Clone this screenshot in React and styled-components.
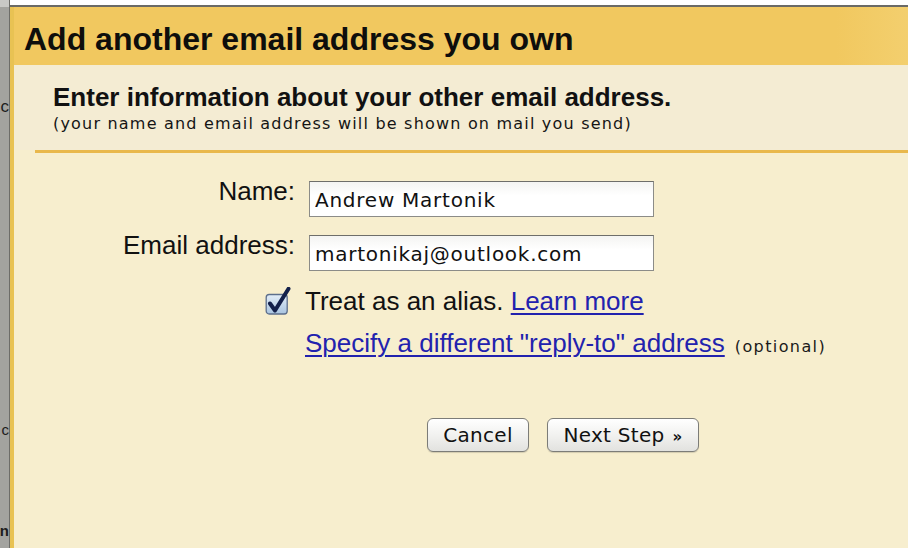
import React from 'react';
import styled, { createGlobalStyle } from 'styled-components';

const GlobalStyle = createGlobalStyle`
    html, body {
        margin: 0;
        padding: 0;
        background: #f7eece;
    }
    * {
        box-sizing: border-box;
    }
`;

const sans = `"Liberation Sans", Arial, sans-serif`;
const lucida = `"DejaVu Sans", "Liberation Sans", sans-serif`;

const AddAddressDialog = () => {
    return (
        <Page>
            <GlobalStyle />
            <SideStrip>
                <Ghost $top={98} $size={17}>c</Ghost>
                <Ghost $top={307} $size={15}>c</Ghost>
                <Ghost $top={86} $size={15} $bold>n</Ghost>
            </SideStrip>
            <Main>
                <TopEdge />
                <Dialog>
                    <Header>
                        <h1>Add another email address you own</h1>
                    </Header>
                    <Intro>
                        <h2>Enter information about your other email address.</h2>
                        <p>(your name and email address will be shown on mail you send)</p>
                    </Intro>
                    <Divider />
                    <Row $mt={28}>
                        <LabelCell>Name:</LabelCell>
                        <TextInput defaultValue="Andrew Martonik" />
                    </Row>
                    <Row $mt={18}>
                        <LabelCell>Email address:</LabelCell>
                        <TextInput defaultValue="martonikaj@outlook.com" />
                    </Row>
                    <Row $mt={15}>
                        <LabelCell>
                            <CheckMark />
                        </LabelCell>
                        <Line>
                            Treat as an alias. <Link href="#">Learn more</Link>
                        </Line>
                    </Row>
                    <Row $mt={12}>
                        <LabelCell />
                        <Line>
                            <Link href="#">Specify a different "reply-to" address</Link>
                            <Optional>(optional)</Optional>
                        </Line>
                    </Row>
                    <Row $mt={56}>
                        <LabelCell />
                        <Buttons>
                            <Button $w={102}>Cancel</Button>
                            <Button $w={152}>
                                Next Step <Arrow>»</Arrow>
                            </Button>
                        </Buttons>
                    </Row>
                </Dialog>
            </Main>
        </Page>
    );
};

const CheckMark = () => (
    <CheckBox width="26" height="28" viewBox="0 0 26 28">
        <defs>
            <linearGradient id="cbfill" x1="0" y1="0" x2="0" y2="1">
                <stop offset="0" stopColor="#e4eef8" />
                <stop offset="1" stopColor="#a9c4e0" />
            </linearGradient>
        </defs>
        <rect x="1.2" y="7.5" width="21" height="19.5" rx="3" fill="url(#cbfill)" stroke="#5d6f8c" strokeWidth="1.3" />
        <path d="M5 16.5 L10 23.5 L23.5 1.8" fill="none" stroke="#13204a" strokeWidth="4" strokeLinecap="round" strokeLinejoin="round" />
    </CheckBox>
);

const Page = styled.div`
    display: flex;
    height: 548px;
    overflow: hidden;
`;

const SideStrip = styled.div`
    width: 10px;
    flex-shrink: 0;
    display: flex;
    flex-direction: column;
    align-items: flex-end;
    background: linear-gradient(#c9c9c6 0, #c9c9c6 7px, #a3a39f 7px);
    border-right: 1px solid #6d6d69;
`;

const Ghost = styled.span`
    display: block;
    margin-top: ${p => p.$top}px;
    font-family: ${sans};
    font-size: ${p => p.$size}px;
    font-weight: ${p => (p.$bold ? 'bold' : 'normal')};
    line-height: 1;
    white-space: nowrap;
    color: #1c1c1c;
`;

const Main = styled.div`
    flex: 1;
    display: flex;
    flex-direction: column;
`;

const TopEdge = styled.div`
    height: 7px;
    background: #fff;
    border-bottom: 2px solid #6a6a66;
`;

const Dialog = styled.div`
    flex: 1;
    background: #f7eece;
    border-left: 4px solid #e8c253;
`;

const Header = styled.div`
    height: 58px;
    background: linear-gradient(90deg, #f1c85f 92%, #f3cf6e);
    padding: 14px 0 0 10px;
    h1 {
        margin: 0;
        font-family: ${sans};
        font-size: 32px;
        font-weight: bold;
        line-height: 36px;
        color: #0e0e0c;
    }
`;

const Intro = styled.div`
    background: #f4ecd3;
    padding: 17px 0 16px 39px;
    h2 {
        margin: 0;
        font-family: ${sans};
        font-size: 26px;
        font-weight: bold;
        line-height: 30px;
        color: #111;
    }
    p {
        margin: 2px 0 0;
        font-family: ${lucida};
        font-size: 16px;
        line-height: 20px;
        letter-spacing: 1.2px;
        color: #151515;
    }
`;

const Divider = styled.div`
    height: 3px;
    margin-left: 21px;
    background: #e9b84c;
`;

const Row = styled.div`
    display: flex;
    align-items: flex-start;
    gap: 14px;
    margin-top: ${p => p.$mt}px;
`;

const LabelCell = styled.div`
    width: 281px;
    flex-shrink: 0;
    display: flex;
    justify-content: flex-end;
    font-family: ${sans};
    font-size: 26px;
    line-height: 20px;
    color: #111;
`;

const CheckBox = styled.svg`
    display: block;
    margin: 1px 4px 0 0;
`;

const TextInput = styled.input`
    width: 345px;
    height: 36px;
    padding: 2px 5px 0;
    border: 1px solid #8c8c88;
    border-top-color: #6e6e6a;
    background: linear-gradient(#f4f4f2, #ffffff 40%);
    font-family: ${lucida};
    font-size: 20px;
    letter-spacing: 0.75px;
    color: #111;
    outline: none;
`;

const Line = styled.div`
    margin-left: -4px;
    font-family: ${sans};
    font-size: 26px;
    line-height: 30px;
    color: #111;
    white-space: nowrap;
`;

const Link = styled.a`
    color: #2222ae;
    text-decoration: underline;
    text-decoration-thickness: 2px;
    text-underline-offset: 3px;
`;

const Optional = styled.span`
    margin-left: 10px;
    font-family: ${lucida};
    font-size: 16px;
    letter-spacing: 1.4px;
    color: #1a1a1a;
`;

const Buttons = styled.div`
    display: flex;
    gap: 18px;
    padding-left: 118px;
`;

const Button = styled.button`
    width: ${p => p.$w}px;
    height: 34px;
    padding: 0;
    border: 1px solid #7c7c78;
    border-radius: 6px;
    background: linear-gradient(#ffffff, #f0f0ee 55%, #e2e2df);
    box-shadow: 0 1px 1px rgba(0, 0, 0, 0.15);
    font-family: ${lucida};
    font-size: 20px;
    letter-spacing: 0.3px;
    color: #111;
    display: flex;
    align-items: center;
    justify-content: center;
    gap: 8px;
`;

const Arrow = styled.span`
    font-size: 15px;
    font-weight: bold;
    margin-top: 3px;
`;

export default AddAddressDialog;
